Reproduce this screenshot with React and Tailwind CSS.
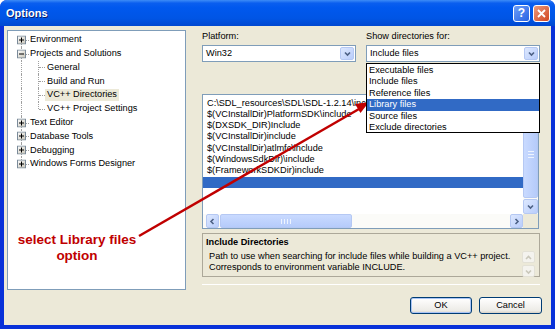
import React from 'react';

const tree = [
  { label: 'Environment', box: 'plus', first: true },
  { label: 'Projects and Solutions', box: 'minus' },
  { label: 'General', child: true },
  { label: 'Build and Run', child: true },
  { label: 'VC++ Directories', child: true, selected: true },
  { label: 'VC++ Project Settings', child: true, lastChild: true },
  { label: 'Text Editor', box: 'plus' },
  { label: 'Database Tools', box: 'plus' },
  { label: 'Debugging', box: 'plus' },
  { label: 'Windows Forms Designer', box: 'plus', last: true },
];

const dirs = [
  'C:\\SDL_resources\\SDL\\SDL-1.2.14\\include',
  '$(VCInstallDir)PlatformSDK\\include',
  '$(DXSDK_DIR)Include',
  '$(VCInstallDir)include',
  '$(VCInstallDir)atlmfc\\include',
  '$(WindowsSdkDir)\\include',
  '$(FrameworkSDKDir)include',
];

const showFor = ['Executable files', 'Include files', 'Reference files', 'Library files', 'Source files', 'Exclude directories'];

function Expander({ kind }) {
  return (
    <svg width="9" height="9" viewBox="0 0 9 9" className="absolute left-[4px] top-1/2 -translate-y-1/2">
      <defs>
        <linearGradient id="xpbox" x1="0" y1="0" x2="1" y2="1">
          <stop offset="0" stopColor="#ffffff" />
          <stop offset="1" stopColor="#c6c3b6" />
        </linearGradient>
      </defs>
      <rect x="0.5" y="0.5" width="8" height="8" fill="url(#xpbox)" stroke="#7a8a99" />
      <line x1="2" y1="4.5" x2="7" y2="4.5" stroke="#000" />
      {kind === 'plus' && <line x1="4.5" y1="2" x2="4.5" y2="7" stroke="#000" />}
    </svg>
  );
}

function Chevron({ dir = 'down', disabled }) {
  const pts = {
    down: '2,3.5 4.5,6 7,3.5',
    up: '2,6 4.5,3.5 7,6',
    left: '5.5,2 3,4.5 5.5,7',
    right: '3.5,2 6,4.5 3.5,7',
  }[dir];
  return (
    <svg width="9" height="9" viewBox="0 0 9 9">
      <polyline points={pts} fill="none" stroke={disabled ? '#c9c7ba' : '#4d6185'} strokeWidth="1.6" />
    </svg>
  );
}

function ScrollBtn({ dir, className = '' }) {
  return (
    <div className={`flex items-center justify-center rounded-[2px] border border-[#b5c8f3] bg-[linear-gradient(135deg,#dde8fe,#b9cdfb)] ${className}`}>
      <Chevron dir={dir} />
    </div>
  );
}

function Combo({ value, w }) {
  return (
    <div className={`flex h-[17px] items-center border border-[#7f9db9] bg-white ${w}`}>
      <span className="flex-1 pl-[3px]">{value}</span>
      <ScrollBtn dir="down" className="m-px h-[13px] w-[14px]" />
    </div>
  );
}

export default function App() {
  return (
    <div className="relative h-[329px] w-[555px] overflow-hidden rounded-t-[7px] bg-[#0831d9] font-['Liberation_Sans',Arial,sans-serif] text-[9.2px] leading-none text-black">
      {/* title bar */}
      <div className="flex h-[26px] items-center bg-[linear-gradient(to_bottom,#3d8cf7_0%,#0a5eef_12%,#0058ee_30%,#0055e5_70%,#0048d0_100%)] pl-[6px] pr-[5px]">
        <span className="flex-1 text-[11px] font-bold text-white [text-shadow:1px_1px_0_#0a1f6e]">Options</span>
        <div className="flex gap-[3px]">
          <div className="flex h-[17px] w-[17px] items-center justify-center rounded-[3px] border border-white bg-[linear-gradient(135deg,#6f9ff8,#2662e3)] text-[12px] font-bold text-white">?</div>
          <div className="flex h-[17px] w-[17px] items-center justify-center rounded-[3px] border border-white bg-[linear-gradient(135deg,#e99a7d,#d3461f)]">
            <svg width="9" height="9" viewBox="0 0 9 9">
              <path d="M1 1 L8 8 M8 1 L1 8" stroke="#fff" strokeWidth="1.8" />
            </svg>
          </div>
        </div>
      </div>

      {/* client area */}
      <div className="mx-[4px] flex h-[299px] bg-[#ece9d8] px-[3px] pt-[4px]">
        {/* tree */}
        <div className="h-[260px] w-[179px] border border-[#7f9db9] bg-white pl-[5px] pt-[2px]">
          {tree.map((n) => (
            <div key={n.label} className="flex h-[13.8px] items-center">
              <div className="relative h-full w-[16px]">
                <div
                  className={`absolute left-[8px] border-l border-dotted border-[#a0a0a0] ${n.first ? 'top-1/2' : 'top-0'} ${n.last ? 'bottom-1/2' : 'bottom-0'}`}
                />
                {!n.child && <div className="absolute left-[9px] right-0 top-1/2 border-t border-dotted border-[#a0a0a0]" />}
                {n.box && <Expander kind={n.box} />}
              </div>
              {n.child && (
                <div className="relative h-full w-[16px]">
                  <div className={`absolute left-[9px] top-0 border-l border-dotted border-[#a0a0a0] ${n.lastChild ? 'bottom-1/2' : 'bottom-0'}`} />
                  <div className="absolute left-[10px] right-0 top-1/2 border-t border-dotted border-[#a0a0a0]" />
                </div>
              )}
              <span className={`px-[2px] py-[1.5px] ${n.selected ? 'bg-[#ece9d8]' : ''} ${n.child ? '' : '-ml-px'}`}>{n.label}</span>
            </div>
          ))}
        </div>

        {/* right side */}
        <div className="ml-[16px] flex w-[340px] flex-col">
          <div className="flex h-[14px] items-center">
            <span className="w-[164px]">Platform:</span>
            <span>Show directories for:</span>
          </div>
          <div className="mt-px flex gap-[10px]">
            <Combo value="Win32" w="w-[154px]" />
            <div className="relative">
              <Combo value="Include files" w="w-[174px]" />
              <div className="absolute left-0 top-[18px] z-10 h-[70px] w-[174px] border border-black bg-white pt-px">
                {showFor.map((s) => (
                  <div
                    key={s}
                    className={`flex h-[11.4px] items-center pl-[2px] ${s === 'Library files' ? 'bg-[#316ac5] text-white' : ''}`}
                  >
                    {s}
                  </div>
                ))}
              </div>
            </div>
          </div>

          {/* directories list */}
          <div className="mt-[32px] flex h-[135px] w-[337px] flex-col border border-[#7f9db9] bg-white">
            <div className="flex h-[119px]">
              <div className="flex-1 overflow-hidden pt-[2.5px]">
                {dirs.map((d) => (
                  <div key={d} className="flex h-[11.3px] items-center whitespace-nowrap pl-[4px]">
                    {d}
                  </div>
                ))}
                <div className="h-[11.3px] bg-[#316ac5]" />
              </div>
              <div className="flex w-[15px] flex-col bg-[#fbfbf8]">
                <ScrollBtn dir="up" className="h-[15px]" />
                <div className="my-px flex flex-1 items-center justify-center rounded-[2px] border border-[#b5c8f3] bg-[linear-gradient(90deg,#c9daff,#b5cbfa)]">
                  <div className="flex flex-col gap-[2px]">
                    <div className="h-px w-[6px] bg-[#eef4fe]" />
                    <div className="h-px w-[6px] bg-[#eef4fe]" />
                    <div className="h-px w-[6px] bg-[#eef4fe]" />
                  </div>
                </div>
                <ScrollBtn dir="down" className="h-[15px]" />
              </div>
            </div>
            <div className="flex h-[14px] bg-[#fbfbf8]">
              <ScrollBtn dir="left" className="ml-[3px] w-[13px]" />
              <div className="mx-px flex w-[132px] items-center justify-center rounded-[2px] border border-[#b5c8f3] bg-[linear-gradient(to_bottom,#c9daff,#b5cbfa)]">
                <div className="flex gap-[2px]">
                  <div className="h-[5px] w-px bg-[#eef4fe]" />
                  <div className="h-[5px] w-px bg-[#eef4fe]" />
                  <div className="h-[5px] w-px bg-[#eef4fe]" />
                  <div className="h-[5px] w-px bg-[#eef4fe]" />
                </div>
              </div>
              <div className="flex-1" />
              <ScrollBtn dir="right" className="w-[13px]" />
              <div className="w-[15px] bg-[#ece9d8]" />
            </div>
          </div>

          {/* description */}
          <div className="mt-[4px] flex h-[44px] w-[338px] flex-col border border-[#aca899] bg-[#ece9d8] pl-[3px] pr-[4px]">
            <div className="pt-[4px] font-bold">Include Directories</div>
            <div className="mt-[4px] flex flex-1">
              <div className="flex-1 pl-[3px] leading-[11px]">
                <div>Path to use when searching for include files while building a VC++ project.</div>
                <div>Corresponds to environment variable INCLUDE.</div>
              </div>
              <div className="flex w-[13px] flex-col gap-[2px]">
                <div className="flex h-[12px] items-center justify-center rounded-[2px] border border-[#e3e1d6] bg-[#f4f3ee]">
                  <Chevron dir="up" disabled />
                </div>
                <div className="flex h-[12px] items-center justify-center rounded-[2px] border border-[#e3e1d6] bg-[#f4f3ee]">
                  <Chevron dir="down" disabled />
                </div>
              </div>
            </div>
          </div>

          <div className="mt-[7px] h-px w-[338px] border-b border-white bg-[#aca899]" />

          <div className="mt-[12px] flex justify-end gap-[7px]">
            <button className="h-[17px] w-[62px] rounded-[3px] border border-[#003c74] bg-[linear-gradient(to_bottom,#ffffff,#ecebe6_85%,#d6d0c5)] shadow-[inset_0_0_0_1px_#a9c4f5]">
              OK
            </button>
            <button className="h-[17px] w-[63px] rounded-[3px] border border-[#003c74] bg-[linear-gradient(to_bottom,#ffffff,#ecebe6_85%,#d6d0c5)]">
              Cancel
            </button>
          </div>
        </div>
      </div>

      {/* annotation */}
      <div className="absolute left-[10px] top-[232px] w-[134px] text-center text-[13.5px] font-bold leading-[16px] text-[#c00000]">
        <div>select Library files</div>
        <div>option</div>
      </div>
      <svg className="pointer-events-none absolute inset-0" width="555" height="329">
        <line x1="139" y1="236" x2="359" y2="109" stroke="#c00000" strokeWidth="2.5" />
        <polygon points="369,102 360.5,113 355,104" fill="#c00000" />
      </svg>
    </div>
  );
}
